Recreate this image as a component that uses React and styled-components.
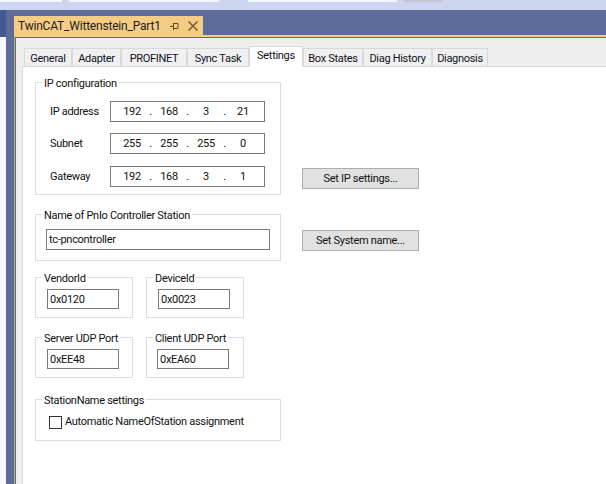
import React from "react";
import styled, { createGlobalStyle } from "styled-components";

const GlobalStyle = createGlobalStyle`
  html, body, #root {
    margin: 0;
    height: 100%;
  }
  body {
    overflow: hidden;
    font-family: Roboto, "Noto Sans", sans-serif;
    font-size: 11px;
    letter-spacing: -0.3px;
    color: #111;
  }
`;

const TABS = ["General", "Adapter", "PROFINET", "Sync Task", "Settings", "Box States", "Diag History", "Diagnosis"];
const TAB_WIDTHS = [48, 49, 66, 62, 54, 60, 69, 56];

const IpField = ({ parts }) => (
  <Field>
    {parts.map((p, i) => (
      <React.Fragment key={i}>
        <Octet>{p}</Octet>
        {i < 3 && <Dot>.</Dot>}
      </React.Fragment>
    ))}
  </Field>
);

const SmallGroup = ({ title, value, inset }) => (
  <Group $width={98}>
    <Legend>{title}</Legend>
    <SmallBody $inset={inset}>
      <TextBox $width={72}>{value}</TextBox>
    </SmallBody>
  </Group>
);

const App = () => {
  return (
    <Screen>
      <GlobalStyle />
      <TopBar>
        <Sliver $width={62} />
        <Sliver $width={150} $gap={7} />
        <Sliver $width={149} $gap={29} />
        <Sliver $width={39} $gap={7} $grey />
      </TopBar>
      <Main>
        <SideStrip>
          <SideHead />
        </SideStrip>
        <Dock>
          <DocStrip>
            <DocTab>
              <DocTitle>TwinCAT_Wittenstein_Part1</DocTitle>
              <PinIcon width="9" height="8" viewBox="0 0 9 8" fill="none" stroke="#5f4a22" strokeWidth="1">
                <path d="M0 4.500h3M3.500 1v7M3.500 1.500h4.500v5h-4.500" />
              </PinIcon>
              <CloseIcon width="10" height="10" viewBox="0 0 10 10" fill="none" stroke="#75592f" strokeWidth="1.500">
                <path d="M.5 .5l9 9M9.500 .5l-9 9" />
              </CloseIcon>
            </DocTab>
          </DocStrip>
          <Accent>
            <Pane>
              <TabRow>
                {TABS.map((t, i) => (
                  <Tab key={t} $width={TAB_WIDTHS[i]} $active={t === "Settings"}>
                    {t}
                  </Tab>
                ))}
              </TabRow>
              <Content>
                <Row $gap={19}>
                  <Group $width={246}>
                    <Legend>IP configuration</Legend>
                    <IpBody>
                      <IpRow><IpLabel>IP address</IpLabel><IpField parts={["192", "168", "3", "21"]} /></IpRow>
                      <IpRow><IpLabel>Subnet</IpLabel><IpField parts={["255", "255", "255", "0"]} /></IpRow>
                      <IpRow><IpLabel>Gateway</IpLabel><IpField parts={["192", "168", "3", "1"]} /></IpRow>
                    </IpBody>
                  </Group>
                  <ActionButton $bottom={6}>Set IP settings...</ActionButton>
                </Row>
                <Row $gap={16}>
                  <Group $width={246}>
                    <Legend>Name of PnIo Controller Station</Legend>
                    <NameBody>
                      <TextBox $width={224} $height={21}>tc-pncontroller</TextBox>
                    </NameBody>
                  </Group>
                  <ActionButton $bottom={10}>Set System name...</ActionButton>
                </Row>
                <Pair $gap={19}>
                  <SmallGroup title="VendorId" value="0x0120" inset={11} />
                  <SmallGroup title="DeviceId" value="0x0023" inset={11} />
                </Pair>
                <Pair $gap={21}>
                  <SmallGroup title="Server UDP Port" value="0xEE48" inset={11} />
                  <SmallGroup title="Client UDP Port" value="0xEA60" inset={10} />
                </Pair>
                <Group $width={246}>
                  <Legend>StationName settings</Legend>
                  <CheckRow>
                    <CheckBox />
                    <span>Automatic NameOfStation assignment</span>
                  </CheckRow>
                </Group>
              </Content>
            </Pane>
          </Accent>
        </Dock>
      </Main>
    </Screen>
  );
};

const Screen = styled.div`
  width: 606px;
  height: 484px;
  display: flex;
  flex-direction: column;
  overflow: hidden;
`;
const TopBar = styled.div`
  height: 10px;
  flex: none;
  display: flex;
  align-items: flex-start;
  background: #ccd6f0;
`;
const Sliver = styled.div`
  width: ${(p) => p.$width}px;
  height: 2px;
  margin-left: ${(p) => p.$gap || 0}px;
  background: ${(p) => (p.$grey ? "#c4c7d2" : "#f2f5fe")};
`;
const Main = styled.div`
  flex: 1;
  display: flex;
  min-height: 0;
`;
const SideStrip = styled.div`
  width: 6px;
  flex: none;
  background: #f6f8ff;
`;
const SideHead = styled.div`
  height: 27px;
  background: #44598f;
`;
const Dock = styled.div`
  flex: 1;
  display: flex;
  flex-direction: column;
  padding-left: 8px;
  background: #5c6b99;
`;
const DocStrip = styled.div`
  height: 25px;
  flex: none;
  display: flex;
  align-items: flex-end;
`;
const DocTab = styled.div`
  width: 189px;
  height: 19px;
  box-sizing: border-box;
  padding: 0 5px 0 4px;
  display: flex;
  align-items: center;
  background: #f5cc84;
`;
const DocTitle = styled.span`
  width: 148px;
  flex: none;
  font-size: 12px;
  letter-spacing: -0.2px;
  color: #1c1c1c;
  white-space: nowrap;
`;
const PinIcon = styled.svg`
  margin-left: 4px;
  flex: none;
`;
const CloseIcon = styled.svg`
  margin-left: 9px;
  flex: none;
`;
const Accent = styled.div`
  flex: 1;
  display: flex;
  min-height: 0;
  border-top: 2px solid #f5cc84;
  border-left: 1px solid #b7b184;
`;
const Pane = styled.div`
  flex: 1;
  display: flex;
  flex-direction: column;
  padding: 8px 0 0 6px;
  background: #eeeeee;
  border-top: 1px solid #6a6a6a;
  border-left: 1px solid #6a6a6a;
`;
const TabRow = styled.div`
  height: 20px;
  flex: none;
  display: flex;
  align-items: flex-end;
  padding-left: 2px;
  position: relative;
  z-index: 1;
`;
const Tab = styled.div`
  width: ${(p) => p.$width}px;
  height: ${(p) => (p.$active ? 21 : 18)}px;
  box-sizing: border-box;
  display: flex;
  align-items: center;
  justify-content: center;
  white-space: nowrap;
  color: #10101c;
  background: ${(p) => (p.$active ? "#ffffff" : "#f0f0f0")};
  border: 1px solid #d9d9d9;
  border-bottom: none;
  margin-bottom: ${(p) => (p.$active ? -1 : 0)}px;
  padding-bottom: ${(p) => (p.$active ? 3 : 0)}px;
  padding-top: ${(p) => (p.$active ? 0 : 1)}px;
`;
const Content = styled.div`
  flex: 1;
  display: flex;
  flex-direction: column;
  align-items: flex-start;
  padding: 15px 0 0 12px;
  background: #ffffff;
  border-top: 1px solid #d9d9d9;
  border-left: 1px solid #d9d9d9;
`;
const Row = styled.div`
  display: flex;
  align-items: flex-end;
  gap: 21px;
  margin-bottom: ${(p) => p.$gap}px;
`;
const Pair = styled.div`
  display: flex;
  gap: 13px;
  margin-bottom: ${(p) => p.$gap}px;
`;
const Group = styled.div`
  position: relative;
  width: ${(p) => p.$width}px;
  box-sizing: border-box;
  border: 1px solid #dcdcdc;
`;
const Legend = styled.div`
  position: absolute;
  top: -6px;
  left: 6px;
  padding: 0 2px;
  line-height: 14px;
  white-space: nowrap;
  background: #ffffff;
`;
const IpBody = styled.div`
  display: flex;
  flex-direction: column;
  gap: 11px;
  padding: 18px 15px 7px 14px;
`;
const IpRow = styled.div`
  display: flex;
  align-items: center;

  &:last-child {
    margin-top: 1px;
  }
`;
const IpLabel = styled.div`
  width: 60px;
  flex: none;
`;
const Field = styled.div`
  width: 155px;
  height: 21px;
  box-sizing: border-box;
  display: flex;
  align-items: center;
  padding-left: 7px;
  border: 1px solid #7a7a7a;
`;
const Octet = styled.span`
  width: 28px;
  text-align: center;
`;
const Dot = styled.span`
  width: 9px;
  text-align: center;
`;
const NameBody = styled.div`
  padding: 14px 10px 10px 10px;
`;
const SmallBody = styled.div`
  padding: 11px 0 8px ${(p) => p.$inset}px;
`;
const TextBox = styled.div`
  width: ${(p) => p.$width}px;
  height: ${(p) => p.$height || 20}px;
  box-sizing: border-box;
  display: flex;
  align-items: center;
  padding-left: 2px;
  border: 1px solid #7a7a7a;
`;
const ActionButton = styled.div`
  width: 117px;
  height: 21px;
  box-sizing: border-box;
  display: flex;
  align-items: center;
  justify-content: center;
  margin-bottom: ${(p) => p.$bottom}px;
  background: #e1e1e1;
  border: 1px solid #adadad;
  color: #111;
  white-space: nowrap;
`;
const CheckRow = styled.div`
  display: flex;
  align-items: center;
  gap: 3px;
  padding: 15px 0 11px 13px;
  line-height: 14px;
  white-space: nowrap;
`;
const CheckBox = styled.div`
  width: 13px;
  height: 13px;
  box-sizing: border-box;
  flex: none;
  background: #ffffff;
  border: 1px solid #333333;
`;

export default App;
